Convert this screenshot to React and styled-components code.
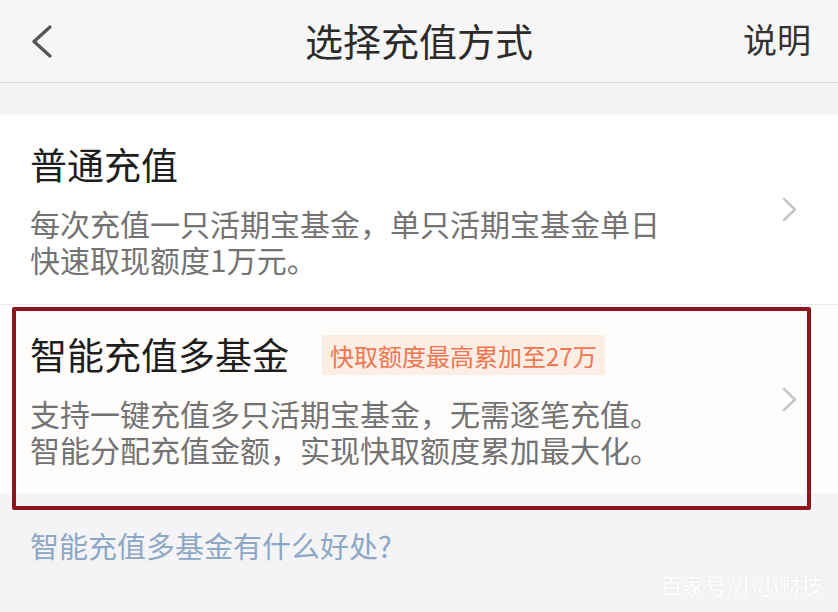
import styled, { createGlobalStyle } from "styled-components";

const GlobalStyle = createGlobalStyle`
  html, body {
    margin: 0;
    padding: 0;
    background: #f4f4f6;
  }
  body {
    font-family: "Noto Sans CJK SC", "Noto Sans", sans-serif;
  }
`;

const Page = styled.div`
  position: relative;
  width: 838px;
  height: 612px;
  overflow: hidden;
  background: #f4f4f6;
`;

const NavBar = styled.header`
  height: 82px;
  display: grid;
  grid-template-columns: 120px 1fr 120px;
  align-items: center;
  background: #f6f6f6;
  border-bottom: 1px solid #dcdcdc;
`;

const BackButton = styled.div`
  padding-left: 32px;
  display: flex;
  align-items: center;
  height: 100%;
`;

const NavTitle = styled.h1`
  margin: 0;
  text-align: center;
  font-size: 38px;
  font-weight: 400;
  color: #2b2b2b;
  line-height: 1;
  padding-bottom: 2px;
`;

const NavAction = styled.div`
  text-align: right;
  padding-right: 27px;
  font-size: 34px;
  color: #333;
  line-height: 1;
  padding-bottom: 4px;
`;

const OptionList = styled.ul`
  list-style: none;
  margin: 32px 0 0;
  padding: 0;
`;

const OptionItem = styled.li`
  position: relative;
  display: flex;
  align-items: center;
  background: ${(p) => (p.$warm ? "#fffdfc" : "#ffffff")};
  padding: 26px 41px 27px 30px;
  border-top: ${(p) => (p.$divider ? "1px solid #ececec" : "none")};
`;

const OptionBody = styled.div`
  flex: 1;
`;

const TitleRow = styled.div`
  display: flex;
  align-items: center;
  gap: 33px;
  height: 46px;
`;

const OptionTitle = styled.div`
  font-size: 37px;
  line-height: 46px;
  color: #1e1e1e;
`;

const Badge = styled.span`
  display: inline-flex;
  align-items: center;
  height: 40px;
  padding: 0 8px;
  background: #fcede5;
  color: #ee7650;
  font-size: 24px;
  margin-top: 2px;
`;

const OptionDesc = styled.div`
  margin-top: 18px;
  display: flex;
  flex-direction: column;
`;

const DescLine = styled.span`
  display: block;
  height: 36px;
  font-size: 30px;
  line-height: 36px;
  color: #737373;
  white-space: nowrap;
`;

const Annotation = styled.div`
  position: absolute;
  left: 12px;
  right: 27px;
  top: 2px;
  bottom: -16px;
  border: 4px solid #8c161b;
  border-radius: 2px;
  pointer-events: none;
`;

const HelpLink = styled.a`
  display: block;
  margin: 33px 0 0 30px;
  font-size: 29px;
  line-height: 36px;
  color: #8da8c6;
  text-decoration: none;
`;

const Watermark = styled.div`
  position: absolute;
  right: 15px;
  bottom: 12px;
  font-size: 22px;
  color: #ffffff;
  text-shadow: 0 0 2px rgba(0, 0, 0, 0.08);
`;

function Chevron({ dir = "right", color = "#c6c6c6", w = 15, h = 25, stroke = 2.5 }) {
  const d = dir === "left" ? `M${w - 2} 2 L2 ${h / 2} L${w - 2} ${h - 2}` : `M2 2 L${w - 2} ${h / 2} L2 ${h - 2}`;
  return (
    <svg width={w} height={h} viewBox={`0 0 ${w} ${h}`} fill="none">
      <path d={d} stroke={color} strokeWidth={stroke} strokeLinecap="round" strokeLinejoin="round" />
    </svg>
  );
}

const options = [
  {
    title: "普通充值",
    lines: ["每次充值一只活期宝基金，单只活期宝基金单日", "快速取现额度1万元。"],
  },
  {
    title: "智能充值多基金",
    badge: "快取额度最高累加至27万",
    lines: ["支持一键充值多只活期宝基金，无需逐笔充值。", "智能分配充值金额，实现快取额度累加最大化。"],
    marked: true,
  },
];

export default function App() {
  return (
    <>
      <GlobalStyle />
      <Page>
        <NavBar>
          <BackButton>
            <Chevron dir="left" color="#555" w={20} h={33} stroke={3.2} />
          </BackButton>
          <NavTitle>选择充值方式</NavTitle>
          <NavAction>说明</NavAction>
        </NavBar>

        <OptionList>
          {options.map((opt, i) => (
            <OptionItem key={opt.title} $divider={i > 0} $warm={opt.marked}>
              <OptionBody>
                <TitleRow>
                  <OptionTitle>{opt.title}</OptionTitle>
                  {opt.badge && <Badge>{opt.badge}</Badge>}
                </TitleRow>
                <OptionDesc>
                  {opt.lines.map((line) => (
                    <DescLine key={line}>{line}</DescLine>
                  ))}
                </OptionDesc>
              </OptionBody>
              <Chevron />
              {opt.marked && <Annotation />}
            </OptionItem>
          ))}
        </OptionList>

        <HelpLink href="#">智能充值多基金有什么好处?</HelpLink>
        <Watermark>百家号/小小财技</Watermark>
      </Page>
    </>
  );
}
